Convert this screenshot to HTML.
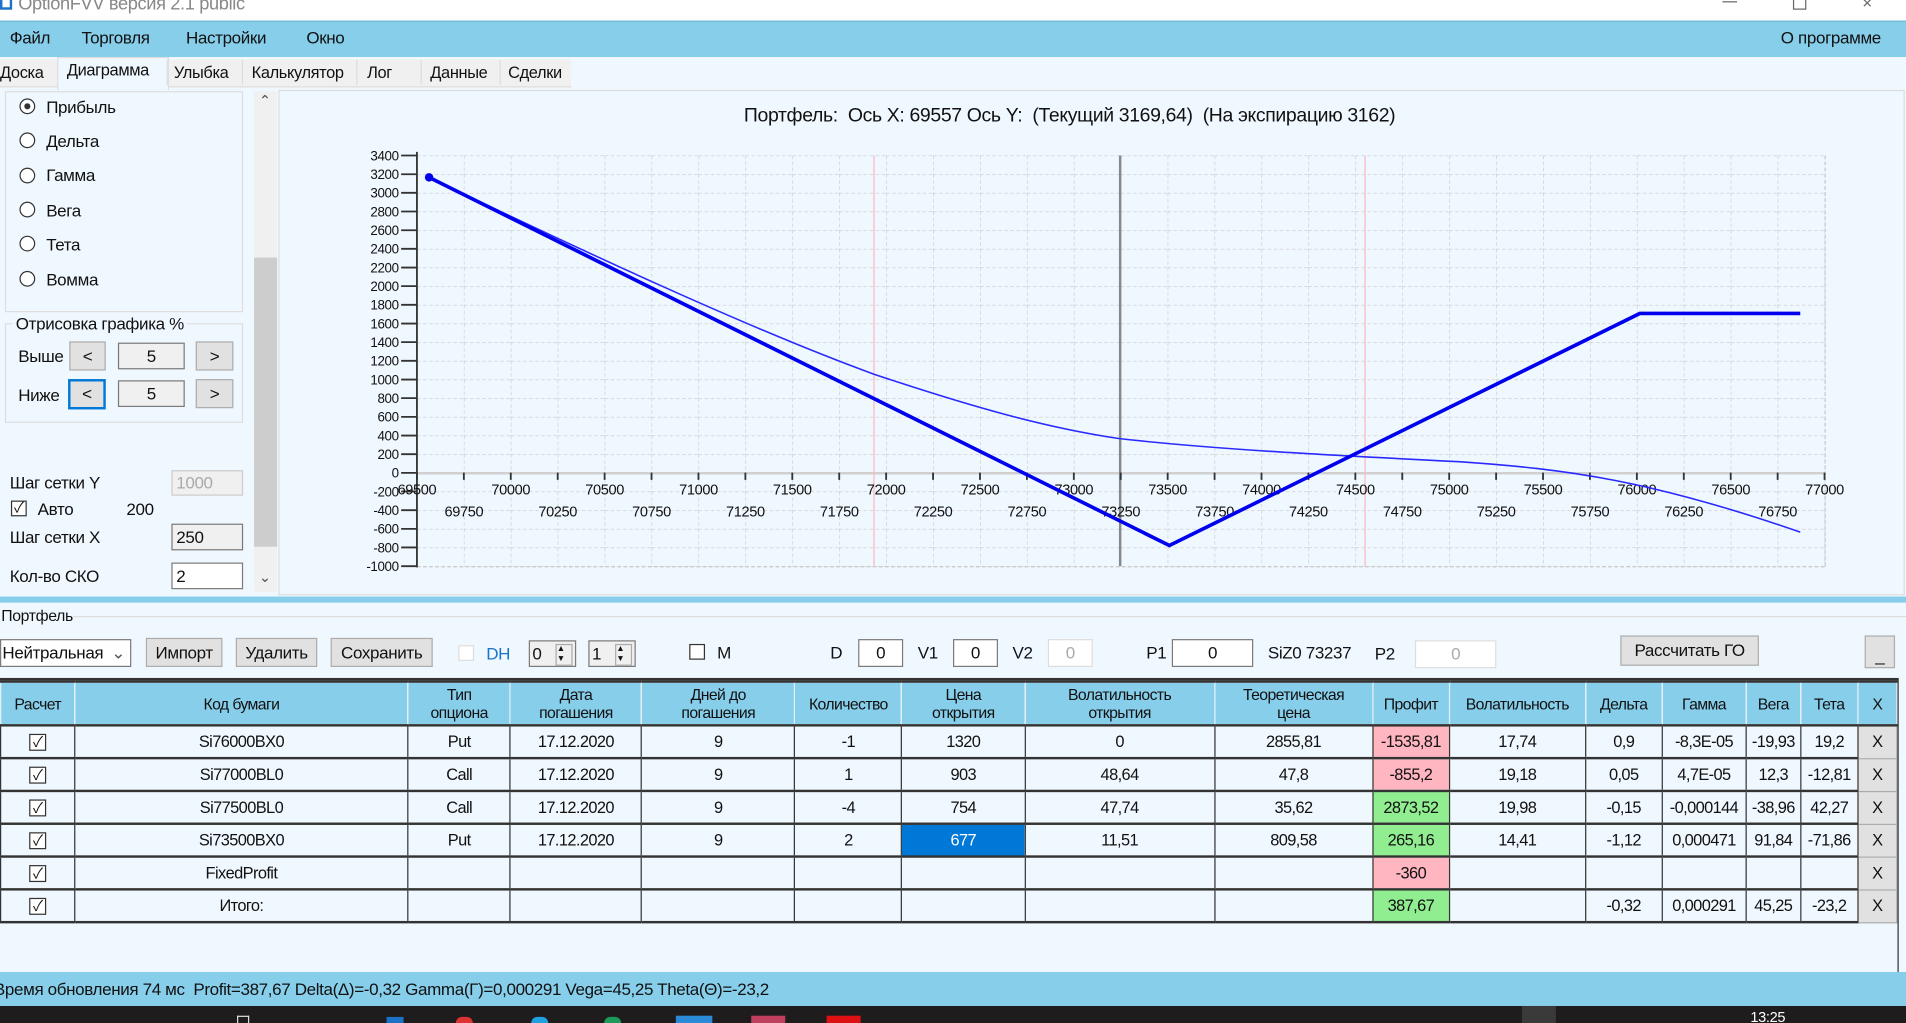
<!DOCTYPE html>
<html><head><meta charset="utf-8"><style>
html,body{margin:0;padding:0;width:1906px;height:1023px;overflow:hidden;background:#f0f8ff}
#r{position:absolute;left:0;top:0;width:1568px;height:842px;transform:scale(1.21556,1.21496);transform-origin:0 0;font-family:"Liberation Sans Narrow","Liberation Sans","Noto Sans CJK SC",sans-serif;font-size:14px;letter-spacing:-0.3px;color:#111;background:#f0f8ff;overflow:hidden}
.a{position:absolute;white-space:nowrap}
.btn{position:absolute;background:#e1e1e1;border:1px solid #adadad;box-sizing:border-box;text-align:center}
.tb{position:absolute;background:#fff;border:1px solid #7a7a7a;box-sizing:border-box;text-align:center}
.rad{position:absolute;width:13px;height:13px;border:1px solid #333;border-radius:50%;background:#fff;box-sizing:border-box}
.chk{position:absolute;width:13px;height:13px;border:1px solid #333;background:#fff;box-sizing:border-box}
table{position:absolute;left:0;top:560px;border-collapse:collapse;table-layout:fixed;width:1561px;font-size:13.5px;letter-spacing:-0.5px}
td,th{border:2px solid #333;text-align:center;padding:0;overflow:hidden;white-space:nowrap}
th{background:#87ceeb;font-weight:normal;height:34px;line-height:15px;font-size:13px;border-color:#333 #f0f8ff;border-left:1px solid #e0eef5;border-right:1px solid #e0eef5}
td{height:25px;background:#f0f8ff;border-left-width:1px;border-right-width:1px}
.pk{background:#ffb6c1}.gr{background:#90ee90}
.x{background:#e1e1e1;border:1px solid #aaa!important}
.cb{display:inline-block;width:14px;height:14px;border:1px solid #333;box-sizing:border-box;background:#fff;font-size:12px;line-height:12px;vertical-align:middle}
</style></head><body><div id="r">
<div class="a" style="left:0;top:0;width:1568px;height:17px;background:#fff"></div>
<div class="a" style="left:0;top:-6px;width:10px;height:14px;border:2px solid #1a73c8;box-sizing:border-box"></div>
<div class="a" style="left:15px;top:-5px;font-size:15px;color:#888;font-family:'Liberation Sans',sans-serif">OptionFVV версия 2.1 public</div>
<div class="a" style="left:1417px;top:1px;width:12px;height:1px;background:#666"></div>
<div class="a" style="left:1475px;top:-3px;width:9px;height:9px;border:1px solid #666"></div>
<div class="a" style="left:1532px;top:-6px;font-size:14px;color:#666">×</div>
<div class="a" style="left:0;top:17px;width:1568px;height:29px;background:#87ceeb;border-top:1px solid #6fb5d5"></div>
<div class="a" style="left:8px;top:23px">Файл</div>
<div class="a" style="left:67px;top:23px">Торговля</div>
<div class="a" style="left:153px;top:23px">Настройки</div>
<div class="a" style="left:252px;top:23px">Окно</div>
<div class="a" style="left:1465px;top:23px">О программе</div>
<div class="a" style="left:0;top:47px;width:1568px;height:24px;background:#f0f8ff"></div>
<div class="a" style="left:0;top:49px;width:470px;height:22px;background:#f0f0f0;border-bottom:1px solid #ddd"></div>
<div class="a" style="left:47px;top:47px;width:90px;height:26px;background:#f0f8ff;border:1px solid #ddd;border-bottom:none"></div>
<div class="a" style="left:0;top:52px;font-size:13.5px">Доска</div>
<div class="a" style="left:55px;top:50px;font-size:13.5px">Диаграмма</div>
<div class="a" style="left:143px;top:52px;font-size:13.5px">Улыбка</div>
<div class="a" style="left:207px;top:52px;font-size:13.5px">Калькулятор</div>
<div class="a" style="left:302px;top:52px;font-size:13.5px">Лог</div>
<div class="a" style="left:354px;top:52px;font-size:13.5px">Данные</div>
<div class="a" style="left:418px;top:52px;font-size:13.5px">Сделки</div>
<div class="a" style="left:137px;top:49px;width:1px;height:21px;background:#ddd"></div>
<div class="a" style="left:199px;top:49px;width:1px;height:21px;background:#ddd"></div>
<div class="a" style="left:293px;top:49px;width:1px;height:21px;background:#ddd"></div>
<div class="a" style="left:346px;top:49px;width:1px;height:21px;background:#ddd"></div>
<div class="a" style="left:411px;top:49px;width:1px;height:21px;background:#ddd"></div>
<div class="a" style="left:4px;top:75px;width:196px;height:182px;border:1px solid #ddd;box-sizing:border-box"></div>
<div class="rad" style="left:16px;top:81px"><div style="position:absolute;left:3px;top:3px;width:5px;height:5px;border-radius:50%;background:#333"></div></div>
<div class="a" style="left:38px;top:80px">Прибыль</div>
<div class="rad" style="left:16px;top:109px"></div><div class="a" style="left:38px;top:108px">Дельта</div>
<div class="rad" style="left:16px;top:138px"></div><div class="a" style="left:38px;top:136px">Гамма</div>
<div class="rad" style="left:16px;top:166px"></div><div class="a" style="left:38px;top:165px">Вега</div>
<div class="rad" style="left:16px;top:194px"></div><div class="a" style="left:38px;top:193px">Тета</div>
<div class="rad" style="left:16px;top:223px"></div><div class="a" style="left:38px;top:222px">Вомма</div>
<div class="a" style="left:4px;top:266px;width:196px;height:82px;border:1px solid #ddd;box-sizing:border-box"></div>
<div class="a" style="left:10px;top:258px;background:#f0f8ff;padding:0 3px">Отрисовка графика %</div>
<div class="a" style="left:15px;top:285px">Выше</div>
<div class="btn" style="left:57px;top:281px;width:30px;height:24px;line-height:22px">&lt;</div>
<div class="tb" style="left:97px;top:282px;width:55px;height:22px;line-height:20px;background:#f0f0f0">5</div>
<div class="btn" style="left:161px;top:281px;width:31px;height:24px;line-height:22px">&gt;</div>
<div class="a" style="left:15px;top:317px">Ниже</div>
<div class="btn" style="left:56px;top:312px;width:31px;height:25px;line-height:21px;border:2px solid #0078d7">&lt;</div>
<div class="tb" style="left:97px;top:313px;width:55px;height:22px;line-height:20px;background:#f0f0f0">5</div>
<div class="btn" style="left:161px;top:312px;width:31px;height:24px;line-height:22px">&gt;</div>
<div class="a" style="left:8px;top:389px">Шаг сетки Y</div>
<div class="tb" style="left:141px;top:387px;width:59px;height:21px;line-height:19px;text-align:left;padding-left:3px;color:#aaa;background:#f0f0f0;border-color:#ccc">1000</div>
<div class="chk" style="left:9px;top:412px;font-size:12px;line-height:11px;text-align:center">✓</div>
<div class="a" style="left:31px;top:411px">Авто</div>
<div class="a" style="left:104px;top:411px">200</div>
<div class="a" style="left:8px;top:434px">Шаг сетки X</div>
<div class="tb" style="left:141px;top:431px;width:59px;height:22px;line-height:20px;text-align:left;padding-left:3px;background:#f0f0f0">250</div>
<div class="a" style="left:8px;top:466px">Кол-во СКО</div>
<div class="tb" style="left:141px;top:463px;width:59px;height:22px;line-height:20px;text-align:left;padding-left:3px">2</div>
<div class="a" style="left:209px;top:75px;width:19px;height:412px;background:#f0f0f0"></div>
<div class="a" style="left:209px;top:212px;width:19px;height:238px;background:#cdcdcd"></div>
<div class="a" style="left:213px;top:76px;font-size:12px;color:#555">⌃</div>
<div class="a" style="left:213px;top:468px;font-size:12px;color:#555">⌄</div>
<div class="a" style="left:229px;top:74px;width:1338px;height:416px;border:1px solid #ddd;box-sizing:border-box"></div>
<div class="a" style="left:612px;top:87px;font-size:16px">Портфель:&nbsp; Ось X: 69557 Ось Y:&nbsp; (Текущий 3169,64)&nbsp; (На экспирацию 3162)</div>
<svg class="a" style="left:0;top:0" width="1568" height="500" font-family="Liberation Sans Narrow,Liberation Sans,sans-serif" font-size="11" letter-spacing="-0.3">
<defs><pattern id="g" x="343" y="128" width="38.6" height="15.3636" patternUnits="userSpaceOnUse"><path d="M0 0V15.36M0 0H38.6" stroke="#c8c8c8" stroke-width="1" stroke-dasharray="3 2" fill="none"/></pattern></defs>
<rect x="343" y="128" width="1159" height="338.5" fill="url(#g)"/>
<path d="M1501.5 128V466.5M343 466.5H1501.5" stroke="#c8c8c8" stroke-dasharray="3 2"/>
<line x1="343" y1="389.5" x2="1501" y2="389.5" stroke="#d0d0d0" stroke-width="2"/>
<line x1="719" y1="128" x2="719" y2="466" stroke="#ffb6c1" stroke-width="1"/>
<line x1="1123" y1="128" x2="1123" y2="466" stroke="#ffb6c1" stroke-width="1"/>
<line x1="921.5" y1="128" x2="921.5" y2="466" stroke="#888" stroke-width="2"/>
<line x1="343" y1="125" x2="343" y2="467" stroke="#333" stroke-width="1.5"/>
<g stroke="#333" stroke-width="1.5">
<path d="M330 128H343M330 143.4H343M330 158.7H343M330 174.1H343M330 189.5H343M330 204.8H343M330 220.2H343M330 235.5H343M330 250.9H343M330 266.3H343M330 281.6H343M330 297H343M330 312.4H343M330 327.7H343M330 343.1H343M330 358.5H343M330 373.8H343M330 389.2H343M330 404.5H343M330 419.9H343M330 435.3H343M330 450.6H343M330 466H343"/>
<path d="M343 389V395M381.6 389V395M420.2 389V395M458.8 389V395M497.4 389V395M536 389V395M574.6 389V395M613.2 389V395M651.8 389V395M690.4 389V395M729 389V395M767.6 389V395M806.2 389V395M844.8 389V395M883.4 389V395M922 389V395M960.6 389V395M999.2 389V395M1037.8 389V395M1076.4 389V395M1115 389V395M1153.6 389V395M1192.2 389V395M1230.8 389V395M1269.4 389V395M1308 389V395M1346.6 389V395M1385.2 389V395M1423.8 389V395M1462.4 389V395M1501 389V395"/>
</g>
<g text-anchor="end" fill="#111">
<text x="328" y="132">3400</text><text x="328" y="147.4">3200</text><text x="328" y="162.7">3000</text><text x="328" y="178.1">2800</text><text x="328" y="193.5">2600</text><text x="328" y="208.8">2400</text><text x="328" y="224.2">2200</text><text x="328" y="239.5">2000</text><text x="328" y="254.9">1800</text><text x="328" y="270.3">1600</text><text x="328" y="285.6">1400</text><text x="328" y="301">1200</text><text x="328" y="316.4">1000</text><text x="328" y="331.7">800</text><text x="328" y="347.1">600</text><text x="328" y="362.5">400</text><text x="328" y="377.8">200</text><text x="328" y="393.2">0</text><text x="328" y="408.5">-200</text><text x="328" y="423.9">-400</text><text x="328" y="439.3">-600</text><text x="328" y="454.6">-800</text><text x="328" y="470">-1000</text>
</g>
<g text-anchor="middle" fill="#111" font-size="12">
<text x="343" y="407">69500</text><text x="420.2" y="407">70000</text><text x="497.4" y="407">70500</text><text x="574.6" y="407">71000</text><text x="651.8" y="407">71500</text><text x="729" y="407">72000</text><text x="806.2" y="407">72500</text><text x="883.4" y="407">73000</text><text x="960.6" y="407">73500</text><text x="1037.8" y="407">74000</text><text x="1115" y="407">74500</text><text x="1192.2" y="407">75000</text><text x="1269.4" y="407">75500</text><text x="1346.6" y="407">76000</text><text x="1423.8" y="407">76500</text><text x="1501" y="407">77000</text>
<text x="381.6" y="425">69750</text><text x="458.8" y="425">70250</text><text x="536" y="425">70750</text><text x="613.2" y="425">71250</text><text x="690.4" y="425">71750</text><text x="767.6" y="425">72250</text><text x="844.8" y="425">72750</text><text x="922" y="425">73250</text><text x="999.2" y="425">73750</text><text x="1076.4" y="425">74250</text><text x="1153.6" y="425">74750</text><text x="1230.8" y="425">75250</text><text x="1308" y="425">75750</text><text x="1385.2" y="425">76250</text><text x="1462.4" y="425">76750</text>
</g>
<path d="M353 146C480 207 620 272 719 308C800 335 860 352 921 361C1000 370 1100 375 1200 380C1290 386 1360 396 1481 438" stroke="#2a2aff" stroke-width="1.3" fill="none"/>
<path d="M353 146L962 449L1349 258L1481 258" stroke="#0000ee" stroke-width="3" fill="none"/>
<circle cx="353" cy="146" r="3.5" fill="#0000ee"/>
</svg>
<div class="a" style="left:0;top:491px;width:1568px;height:5px;background:#87ceeb"></div>
<div class="a" style="left:1px;top:499px;font-size:13px">Портфель</div>
<div class="a" style="left:60px;top:507px;width:1508px;height:1px;background:#ddd"></div>
<div class="tb" style="left:0;top:526px;width:108px;height:23px;line-height:21px;text-align:left;padding-left:1px">Нейтральная<span style="position:absolute;right:4px;color:#555">⌄</span></div>
<div class="btn" style="left:120px;top:525px;width:63px;height:24px;line-height:22px">Импорт</div>
<div class="btn" style="left:194px;top:525px;width:67px;height:24px;line-height:22px">Удалить</div>
<div class="btn" style="left:272px;top:525px;width:84px;height:24px;line-height:22px">Сохранить</div>
<div class="chk" style="left:377px;top:531px;border-color:#ddd"></div>
<div class="a" style="left:400px;top:530px;color:#1a73c8">DH</div>
<div class="tb" style="left:435px;top:527px;width:39px;height:22px;line-height:20px;text-align:left;padding-left:2px;background:#f0f0f0">0<span style="position:absolute;right:2px;top:2px;width:12px;height:16px;border:1px solid #aaa;font-size:7px;line-height:8px">▲<br>▼</span></div>
<div class="tb" style="left:484px;top:527px;width:39px;height:22px;line-height:20px;text-align:left;padding-left:2px;background:#f0f0f0">1<span style="position:absolute;right:2px;top:2px;width:12px;height:16px;border:1px solid #aaa;font-size:7px;line-height:8px">▲<br>▼</span></div>
<div class="chk" style="left:567px;top:530px"></div>
<div class="a" style="left:590px;top:529px">M</div>
<div class="a" style="left:683px;top:529px">D</div>
<div class="tb" style="left:706px;top:526px;width:37px;height:23px;line-height:21px">0</div>
<div class="a" style="left:755px;top:529px">V1</div>
<div class="tb" style="left:784px;top:526px;width:37px;height:23px;line-height:21px">0</div>
<div class="a" style="left:833px;top:529px">V2</div>
<div class="tb" style="left:862px;top:526px;width:37px;height:23px;line-height:21px;color:#aaa;border-color:#ddd">0</div>
<div class="a" style="left:943px;top:529px">P1</div>
<div class="tb" style="left:964px;top:526px;width:67px;height:23px;line-height:21px">0</div>
<div class="a" style="left:1043px;top:529px">SiZ0 73237</div>
<div class="a" style="left:1131px;top:530px">P2</div>
<div class="tb" style="left:1164px;top:527px;width:67px;height:23px;line-height:21px;color:#aaa;border-color:#ddd">0</div>
<div class="btn" style="left:1333px;top:523px;width:114px;height:25px;line-height:23px">Рассчитать ГО</div>
<div class="btn" style="left:1534px;top:523px;width:25px;height:27px;line-height:30px">_</div>
<div class="a" style="left:0;top:558px;width:1561px;height:2px;background:#333"></div>
<table>
<colgroup><col style="width:61px"><col style="width:274px"><col style="width:84px"><col style="width:108px"><col style="width:126px"><col style="width:88px"><col style="width:101px"><col style="width:156px"><col style="width:130px"><col style="width:63px"><col style="width:112px"><col style="width:63px"><col style="width:69px"><col style="width:45px"><col style="width:47px"><col style="width:32px"></colgroup>
<tr><th>Расчет</th><th>Код бумаги</th><th>Тип<br>опциона</th><th>Дата<br>погашения</th><th>Дней до<br>погашения</th><th>Количество</th><th>Цена<br>открытия</th><th>Волатильность<br>открытия</th><th>Теоретическая<br>цена</th><th>Профит</th><th>Волатильность</th><th>Дельта</th><th>Гамма</th><th>Вега</th><th>Тета</th><th>X</th></tr>
<tr><td><span class="cb">✓</span></td><td>Si76000BX0</td><td>Put</td><td>17.12.2020</td><td>9</td><td>-1</td><td>1320</td><td>0</td><td>2855,81</td><td class="pk">-1535,81</td><td>17,74</td><td>0,9</td><td>-8,3E-05</td><td>-19,93</td><td>19,2</td><td class="x">X</td></tr>
<tr><td><span class="cb">✓</span></td><td>Si77000BL0</td><td>Call</td><td>17.12.2020</td><td>9</td><td>1</td><td>903</td><td>48,64</td><td>47,8</td><td class="pk">-855,2</td><td>19,18</td><td>0,05</td><td>4,7E-05</td><td>12,3</td><td>-12,81</td><td class="x">X</td></tr>
<tr><td><span class="cb">✓</span></td><td>Si77500BL0</td><td>Call</td><td>17.12.2020</td><td>9</td><td>-4</td><td>754</td><td>47,74</td><td>35,62</td><td class="gr">2873,52</td><td>19,98</td><td>-0,15</td><td>-0,000144</td><td>-38,96</td><td>42,27</td><td class="x">X</td></tr>
<tr><td><span class="cb">✓</span></td><td>Si73500BX0</td><td>Put</td><td>17.12.2020</td><td>9</td><td>2</td><td style="background:#0078d7;color:#fff">677</td><td>11,51</td><td>809,58</td><td class="gr">265,16</td><td>14,41</td><td>-1,12</td><td>0,000471</td><td>91,84</td><td>-71,86</td><td class="x">X</td></tr>
<tr><td><span class="cb">✓</span></td><td>FixedProfit</td><td></td><td></td><td></td><td></td><td></td><td></td><td></td><td class="pk">-360</td><td></td><td></td><td></td><td></td><td></td><td class="x">X</td></tr>
<tr><td><span class="cb">✓</span></td><td>Итого:</td><td></td><td></td><td></td><td></td><td></td><td></td><td></td><td class="gr">387,67</td><td></td><td>-0,32</td><td>0,000291</td><td>45,25</td><td>-23,2</td><td class="x">X</td></tr>
</table>
<div class="a" style="left:1561px;top:558px;width:1px;height:242px;background:#333"></div>
<div class="a" style="left:0;top:800px;width:1568px;height:28px;background:#87ceeb"></div>
<div class="a" style="left:-5px;top:806px">Время обновления 74 мс&nbsp; Profit=387,67 Delta(Δ)=-0,32 Gamma(Γ)=0,000291 Vega=45,25 Theta(Θ)=-23,2</div>
<div class="a" style="left:0;top:828px;width:1568px;height:14px;background:#1e1c1c"></div>
<div class="a" style="left:1252px;top:828px;width:28px;height:14px;background:#3a3a3a"></div>
<div class="a" style="left:195px;top:836px;width:8px;height:6px;border:1px solid #ddd;border-bottom:none"></div>
<div class="a" style="left:318px;top:837px;width:14px;height:5px;background:#1a73c8"></div>
<div class="a" style="left:375px;top:837px;width:14px;height:5px;background:#d33;border-radius:7px 7px 0 0"></div>
<div class="a" style="left:437px;top:837px;width:14px;height:5px;background:#1fa0e0;border-radius:7px 7px 0 0"></div>
<div class="a" style="left:497px;top:837px;width:14px;height:5px;background:#1c9a5a;border-radius:7px 7px 0 0"></div>
<div class="a" style="left:556px;top:836px;width:30px;height:6px;background:#2a8ad8"></div>
<div class="a" style="left:618px;top:836px;width:28px;height:6px;background:#c04060"></div>
<div class="a" style="left:680px;top:836px;width:28px;height:6px;background:#d11"></div>
<div class="a" style="left:1440px;top:830px;color:#fff;font-size:12px">13:25</div>
</div></body></html>
